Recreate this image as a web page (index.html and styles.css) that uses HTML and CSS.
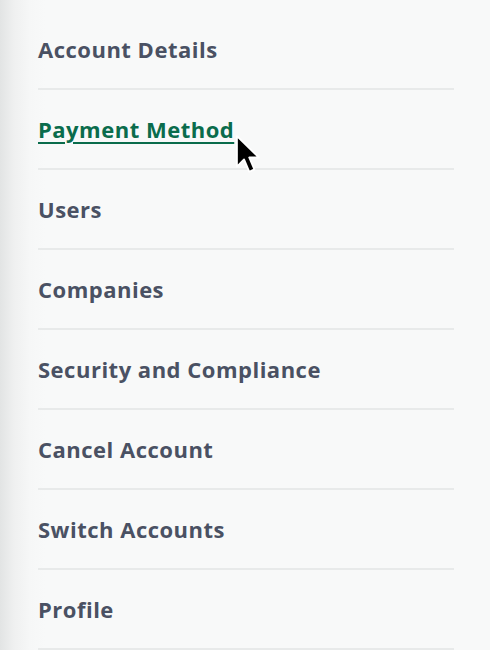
FILE: index.html
```html
<!DOCTYPE html>
<html>
<head>
<meta charset="utf-8">
<link rel="stylesheet" href="styles.css">
</head>
<body>
<nav class="menu">
  <a class="item" href="#">Account Details</a>
  <a class="item active" href="#">Payment Method<svg class="cursor" width="31" height="47" viewBox="0 0 24 36"><path d="M1.5 1.5 L1.5 25 L7 19.5 L11 29 L15 27.2 L11 18 L18.5 18 Z" fill="#000" stroke="#fff" stroke-width="1.4" stroke-linejoin="round"/></svg></a>
  <a class="item" href="#">Users</a>
  <a class="item" href="#">Companies</a>
  <a class="item" href="#">Security and Compliance</a>
  <a class="item" href="#">Cancel Account</a>
  <a class="item" href="#">Switch Accounts</a>
  <a class="item" href="#">Profile</a>
</nav>
</body>
</html>
```

FILE: styles.css
```css
html, body {
  margin: 0;
  padding: 0;
}
body {
  width: 490px;
  height: 650px;
  overflow: hidden;
  background: linear-gradient(to right, #e2e4e4 0px, #eff0f0 14px, #f6f7f7 30px, #f8f9f9 45px);
  font-family: "Open Sans", "Noto Sans", sans-serif;
}
.menu {
  display: flex;
  flex-direction: column;
  margin: 10px 36px 0 38px;
}
.item {
  position: relative;
  display: flex;
  align-items: center;
  height: 78px;
  border-bottom: 2px solid #e8eaea;
  color: #4a5163;
  font-size: 22px;
  font-weight: 700;
  letter-spacing: 0.5px;
  text-decoration: none;
}
.item.active {
  color: #0a6c4c;
  text-decoration: underline;
  text-decoration-thickness: 2px;
  text-underline-offset: 4px;
}
.cursor {
  position: absolute;
  left: 197px;
  top: 44px;
}
```
